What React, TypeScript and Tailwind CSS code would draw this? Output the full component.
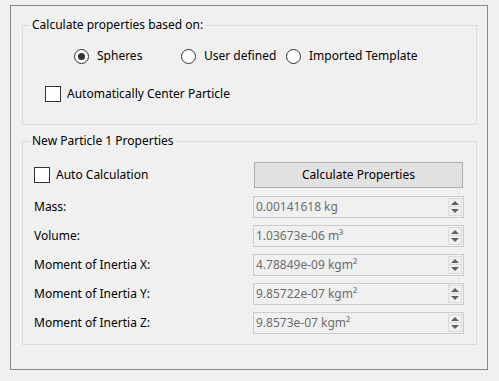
import React from "react";

const font = { fontFamily: "'Noto Sans', Roboto, sans-serif" };

function Radio({ checked, label, w }: { checked?: boolean; label: string; w: string }) {
  return (
    <div className={`flex items-center ${w}`}>
      <div className="w-[15px] h-[15px] rounded-full border border-[#333333] bg-white flex items-center justify-center shrink-0">
        {checked && <div className="w-[7px] h-[7px] rounded-full bg-[#333333]" />}
      </div>
      <span className="ml-[8px] text-[12px] leading-[16px] text-black">{label}</span>
    </div>
  );
}

function Check({ label, gap }: { label: string; gap: string }) {
  return (
    <div className="flex items-center">
      <div className="w-[16px] h-[16px] border border-[#333333] bg-white shrink-0" />
      <span className={`${gap} text-[12px] leading-[16px] text-black`}>{label}</span>
    </div>
  );
}

function Spin({ value }: { value: string }) {
  return (
    <div className="w-[211px] h-[22px] border border-[#cccccc] bg-[#f0f0f0] flex items-center pl-[2px] pr-[1px]">
      <span className="flex-1 text-[12px] leading-[16px] text-[#6d6d6d]">{value}</span>
      <div className="flex flex-col w-[14px] h-[18px] gap-0">
        <div className="h-[9px] border border-[#dcdcdc] flex items-center justify-center">
          <svg width="8" height="4" viewBox="0 0 8 4"><path d="M0 4 L4 0 L8 4 Z" fill="#606060" /></svg>
        </div>
        <div className="h-[9px] border border-t-0 border-[#dcdcdc] flex items-center justify-center">
          <svg width="8" height="4" viewBox="0 0 8 4"><path d="M0 0 L8 0 L4 4 Z" fill="#606060" /></svg>
        </div>
      </div>
    </div>
  );
}

function Row({ label, value }: { label: string; value: string }) {
  return (
    <div className="flex items-center h-[22px]">
      <span className="w-[219px] text-[12px] leading-[16px] text-black">{label}</span>
      <Spin value={value} />
    </div>
  );
}

export default function App() {
  return (
    <div className="w-[499px] h-[381px] bg-[#f0f0f0] pt-[5px] pl-[10px]" style={font}>
      <div className="w-[478px] h-[365px] border border-[#828790] pl-[11px] pt-[19px]">
        <div className="relative w-[455px] h-[100px] border border-[#dcdcdc]">
          <span className="absolute -top-[9px] left-[7px] px-[2px] bg-[#f0f0f0] text-[12px] leading-[16px] text-black">
            Calculate properties based on:
          </span>
          <div className="flex items-center h-[16px] mt-[22px] pl-[51px]">
            <Radio checked label="Spheres" w="w-[107px]" />
            <Radio label="User defined" w="w-[105px]" />
            <Radio label="Imported Template" w="w-[140px]" />
          </div>
          <div className="mt-[22px] pl-[22px]">
            <Check label="Automatically Center Particle" gap="ml-[6px]" />
          </div>
        </div>
        <div className="relative w-[455px] h-[204px] border border-[#dcdcdc] mt-[16px] pl-[11px]">
          <span className="absolute -top-[9px] left-[7px] px-[2px] bg-[#f0f0f0] text-[12px] leading-[16px] text-black">
            New Particle 1 Properties
          </span>
          <div className="flex items-center h-[26px] mt-[20px]">
            <div className="w-[220px]">
              <Check label="Auto Calculation" gap="ml-[6px]" />
            </div>
            <div className="w-[209px] h-[26px] bg-[#e1e1e1] border border-[#adadad] flex items-center justify-center text-[12px] text-black">
              Calculate Properties
            </div>
          </div>
          <div className="flex flex-col gap-[7px] mt-[8px]">
            <Row label="Mass:" value="0.00141618 kg" />
            <Row label="Volume:" value="1.03673e-06 m³" />
            <Row label="Moment of Inertia X:" value="4.78849e-09 kgm²" />
            <Row label="Moment of Inertia Y:" value="9.85722e-07 kgm²" />
            <Row label="Moment of Inertia Z:" value="9.8573e-07 kgm²" />
          </div>
        </div>
      </div>
    </div>
  );
}
